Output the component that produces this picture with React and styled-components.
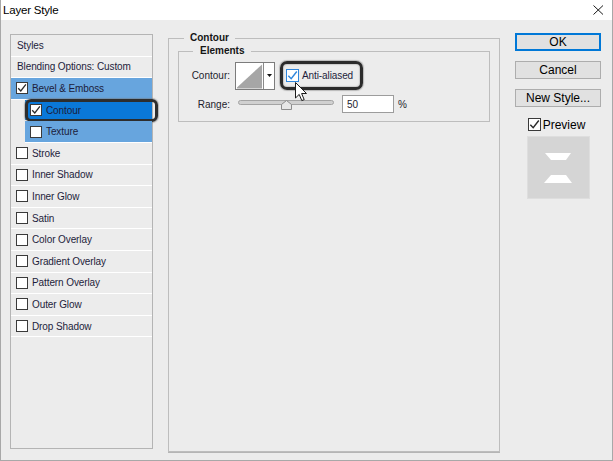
import React from 'react';
import styled, { createGlobalStyle } from 'styled-components';

const Global = createGlobalStyle`
  html, body { margin: 0; padding: 0; background: #ececec; }
  body { font-family: "Liberation Sans", Arial, sans-serif; }
  *, *::before, *::after { box-sizing: border-box; }
`;

const Window = styled.div`
  width: 613px;
  height: 461px;
  display: flex;
  flex-direction: column;
  background: #ececec;
  border: 1px solid #a8a8a8;
  border-top: none;
  overflow: hidden;
`;

const TitleBar = styled.div`
  height: 20px;
  flex: none;
  background: #ffffff;
  display: flex;
  align-items: center;
  justify-content: space-between;
  padding: 0 8px 0 2px;
`;

const Title = styled.span`
  font-size: 11.5px;
  color: #000;
  letter-spacing: -0.2px;
`;

const Body = styled.div`
  flex: 1;
  display: flex;
  align-items: flex-start;
  padding: 12px 0 0 9px;
  gap: 15px;
`;

/* ---------- left styles list ---------- */
const StylesPanel = styled.div`
  width: 143px;
  height: 415px;
  margin-top: 2px;
  border: 1px solid #b4b4b4;
  background: #ececec;
  display: flex;
  flex-direction: column;
`;

const Row = styled.div`
  position: relative;
  height: 21.6px;
  flex: none;
  display: flex;
  align-items: center;
  gap: 4px;
  padding-left: ${p => (p.$plain ? 6 : 5)}px;
  margin-left: ${p => (p.$indent ? 14 : 0)}px;
  border-bottom: 1px solid #ffffff;
  background: ${p => p.$bg || 'transparent'};
  font-size: 10px;
  letter-spacing: -0.1px;
  color: #1d1d3b;
  white-space: nowrap;

  ${p => p.$ring && `
    &::after {
      content: '';
      position: absolute;
      left: 0;
      right: -6px;
      top: -1px;
      bottom: -2px;
      border: 3px solid #2d2d2d;
      border-radius: 6px;
      box-shadow: 0 0 1px 1px rgba(120,120,120,0.5);
    }
  `}
`;

const Box = styled.span`
  width: ${p => p.$size || 12}px;
  height: ${p => p.$size || 12}px;
  flex: none;
  background: #ffffff;
  border: 1px solid ${p => (p.$blue ? '#2f86dc' : '#3a3a3a')};
  display: flex;
  align-items: center;
  justify-content: center;
  position: relative;
  z-index: 1;
`;

function Check({ checked, blue, size }) {
  return (
    <Box $blue={blue} $size={size}>
      {checked && (
        <svg width={size ? size - 2 : 10} height={size ? size - 2 : 10} viewBox="0 0 10 10">
          <path
            d="M1.2 5.2 L3.8 7.9 L8.9 1.4"
            fill="none"
            stroke={blue ? '#2f86dc' : '#2a2a2a'}
            strokeWidth="1.3"
          />
        </svg>
      )}
    </Box>
  );
}

/* ---------- middle panel ---------- */
const Group = styled.fieldset`
  margin: ${p => p.$margin || '0'};
  padding: 0;
  width: ${p => p.$w}px;
  height: ${p => (p.$h ? `${p.$h}px` : 'auto')};
  min-width: 0;
  border: 1px solid #bdbdbd;
  box-shadow: ${p => (p.$outer ? '0 1px 0 #b5b5b5' : 'none')};
`;

const Legend = styled.legend`
  margin-left: ${p => p.$ml}px;
  padding: 0 ${p => p.$px}px;
  font-size: 10px;
  line-height: 12px;
  font-weight: bold;
  color: #151515;
`;

const GroupBody = styled.div`
  padding: 4px 0 8px 10px;
  display: flex;
  flex-direction: column;
  gap: 5px;
`;

const FieldRow = styled.div`
  display: flex;
  align-items: ${p => p.$align || 'center'};
  height: ${p => p.$h}px;
`;

const Label = styled.span`
  width: 41px;
  flex: none;
  text-align: right;
  font-size: 10px;
  color: #1d1d2d;
  align-self: center;
`;

const Swatch = styled.div`
  margin-left: 5px;
  width: 40px;
  height: 28px;
  display: flex;
  border: 1px solid #7c7c7c;
  background: #fff;
  margin-top: 1px;
`;

const SwatchArt = styled.svg`
  width: 28px;
  height: 26px;
  display: block;
  border-right: 1px solid #8a8a8a;
`;

const SwatchArrow = styled.div`
  flex: 1;
  display: flex;
  align-items: center;
  justify-content: center;
  padding-bottom: 2px;
`;

const Highlight = styled.div`
  position: relative;
  margin-left: 5px;
  width: 83px;
  height: 29px;
  border: 3.5px solid #2b2b2b;
  border-radius: 7px;
  box-shadow: 0 0 1px 1px rgba(120,120,120,0.45), inset 0 0 1px 1px rgba(150,150,150,0.4);
  display: flex;
  align-items: center;
  gap: 3px;
  padding-left: 3px;
  font-size: 10px;
  letter-spacing: -0.1px;
  color: #1d1d3b;
  white-space: nowrap;
`;

const Cursor = styled.svg`
  position: absolute;
  left: 12px;
  top: 18px;
  z-index: 2;
`;

const Slider = styled.div`
  position: relative;
  margin-left: 8px;
  margin-top: 5px;
  width: 96px;
  height: 5px;
  border: 1px solid #a3a3a3;
  border-radius: 3px;
  background: #d0d0d0;
`;

const Thumb = styled.svg`
  position: absolute;
  left: ${p => p.$left}px;
  top: -1px;
`;

const NumberBox = styled.div`
  margin-left: 8px;
  width: 52px;
  height: 18px;
  border: 1px solid #9c9c9c;
  background: #ffffff;
  font-size: 10px;
  color: #1d1d2d;
  padding-left: 4px;
  display: flex;
  align-items: center;
`;

const Unit = styled.span`
  margin-left: 4px;
  font-size: 10px;
  color: #1d1d2d;
  align-self: center;
`;

/* ---------- right column ---------- */
const Side = styled.div`
  width: 86px;
  margin-top: 1px;
  display: flex;
  flex-direction: column;
  align-items: center;
`;

const Button = styled.button`
  width: 86px;
  height: 18px;
  padding: 0;
  margin: 0 0 10px 0;
  font-family: "Liberation Sans", Arial, sans-serif;
  font-size: 12px;
  color: #000;
  background: #e1e1e1;
  border: 1px solid ${p => (p.$primary ? '#0078d7' : '#adadad')};
  box-shadow: ${p => (p.$primary ? 'inset 0 0 0 1px #0078d7' : 'none')};
  display: flex;
  align-items: center;
  justify-content: center;
`;

const PreviewRow = styled.label`
  display: flex;
  align-items: center;
  gap: 2px;
  height: 15px;
  font-size: 12px;
  color: #000;
  margin-left: -3px;
`;

const Thumbnail = styled.div`
  margin-top: 4px;
  width: 63px;
  height: 63px;
  background: #d5d5d5;
  border: 1px solid #dedede;
`;

const items = [
  { label: 'Stroke' },
  { label: 'Inner Shadow' },
  { label: 'Inner Glow' },
  { label: 'Satin' },
  { label: 'Color Overlay' },
  { label: 'Gradient Overlay' },
  { label: 'Pattern Overlay' },
  { label: 'Outer Glow' },
  { label: 'Drop Shadow' },
];

export default function App() {
  return (
    <>
      <Global />
      <Window>
        <TitleBar>
          <Title>Layer Style</Title>
          <svg width="11" height="10" viewBox="0 0 11 10">
            <path d="M0.5 0.5 L10 9.5 M10 0.5 L0.5 9.5" stroke="#1a1a1a" strokeWidth="1" fill="none" />
          </svg>
        </TitleBar>
        <Body>
          <StylesPanel>
            <Row $plain>Styles</Row>
            <Row $plain>Blending Options: Custom</Row>
            <Row $bg="#67a5de">
              <Check checked />
              Bevel &amp; Emboss
            </Row>
            <Row $indent $bg="#0a78d8" $ring>
              <Check checked />
              Contour
            </Row>
            <Row $indent $bg="#67a5de">
              <Check />
              Texture
            </Row>
            {items.map(it => (
              <Row key={it.label}>
                <Check />
                {it.label}
              </Row>
            ))}
          </StylesPanel>

          <Group $w={332} $h={420} $outer>
            <Legend $ml={15} $px={6}>Contour</Legend>
            <Group $w={312} $margin="1px 0 0 9px">
              <Legend $ml={14} $px={7}>Elements</Legend>
              <GroupBody>
                <FieldRow $h={29}>
                  <Label>Contour:</Label>
                  <Swatch>
                    <SwatchArt viewBox="0 0 28 26">
                      <polygon points="1,25 27,1 27,26 1,26" fill="#a6a6a6" />
                    </SwatchArt>
                    <SwatchArrow>
                      <svg width="5" height="3" viewBox="0 0 5 3">
                        <polygon points="0,0 5,0 2.5,3" fill="#111" />
                      </svg>
                    </SwatchArrow>
                  </Swatch>
                  <Highlight>
                    <Check checked blue size={13} />
                    Anti-aliased
                    <Cursor width="13" height="20" viewBox="0 0 13 20">
                      <path
                        d="M0.5 0.5 L0.5 16 L4.2 12.4 L6.8 18.6 L9.2 17.6 L6.6 11.5 L11.5 11.5 Z"
                        fill="#ffffff"
                        stroke="#1a1a1a"
                        strokeWidth="1"
                        strokeLinejoin="round"
                      />
                    </Cursor>
                  </Highlight>
                </FieldRow>
                <FieldRow $h={18} $align="flex-start">
                  <Label>Range:</Label>
                  <Slider>
                    <Thumb $left={42} width="11" height="10" viewBox="0 0 11 10">
                      <polygon points="5.5,0.5 10.5,4.5 10.5,9.5 0.5,9.5 0.5,4.5" fill="#e6e6e6" stroke="#8c8c8c" strokeWidth="1" />
                    </Thumb>
                  </Slider>
                  <NumberBox>50</NumberBox>
                  <Unit>%</Unit>
                </FieldRow>
              </GroupBody>
            </Group>
          </Group>

          <Side>
            <Button $primary>OK</Button>
            <Button>Cancel</Button>
            <Button>New Style...</Button>
            <PreviewRow>
              <Check checked size={13} />
              Preview
            </PreviewRow>
            <Thumbnail>
              <svg width="61" height="61" viewBox="0 0 61 61">
                <polygon points="17,16 43,16 38,23 23,23" fill="#ffffff" />
                <polygon points="23,38 38,38 44,46 16,46" fill="#ffffff" />
              </svg>
            </Thumbnail>
          </Side>
        </Body>
      </Window>
    </>
  );
}
